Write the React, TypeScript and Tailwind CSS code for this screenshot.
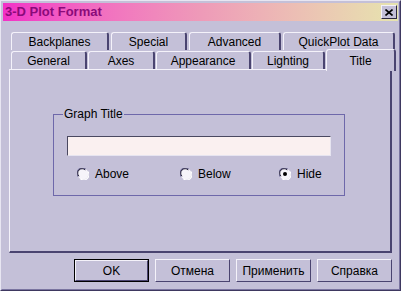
import React from 'react'

const FONT = "font-['Liberation_Sans',Arial,sans-serif]"

const BACK_TABS = [
  { label: 'Backplanes', w: 'w-[98px]' },
  { label: 'Special', w: 'w-[76px]' },
  { label: 'Advanced', w: 'w-[92px]' },
  { label: 'QuickPlot Data', w: 'w-[112px]' },
]

const FRONT_TABS = [
  { label: 'General', w: 'w-[76px]' },
  { label: 'Axes', w: 'w-[67px]' },
  { label: 'Appearance', w: 'w-[95px]' },
  { label: 'Lighting', w: 'w-[73px]' },
]

function Tab({ label, w }: { label: string; w: string }) {
  return (
    <div
      className={`${w} h-[18px] shrink-0 flex items-center justify-center rounded-t-[3px] border-l border-t border-r-2 border-l-[#f4f2fa] border-t-[#f4f2fa] border-r-[#4a4470] text-[12px] text-black`}
    >
      {label}
    </div>
  )
}

function Radio({ label, checked }: { label: string; checked?: boolean }) {
  return (
    <div className="flex items-center gap-[6px] text-[12px] text-black">
      <svg width="12" height="12" viewBox="0 0 12 12">
        <circle cx="6" cy="6" r="5.5" fill="#f6f4fa" />
        <path d="M1.2 8.5 A5.2 5.2 0 0 1 8.5 1.2" stroke="#6a6690" strokeWidth="1.2" fill="none" />
        <path d="M2 8.2 A4.2 4.2 0 0 1 8.2 2" stroke="#2c2840" strokeWidth="1" fill="none" />
        <path d="M3.5 10.8 A5.2 5.2 0 0 0 10.8 3.5" stroke="#ffffff" strokeWidth="1.2" fill="none" />
        {checked && <circle cx="6" cy="6" r="2" fill="#000" />}
      </svg>
      <span>{label}</span>
    </div>
  )
}

function Button({ label, def }: { label: string; def?: boolean }) {
  return (
    <div className={`w-[75px] h-[23px] ${def ? 'border border-black' : ''}`}>
      <div className="w-full h-full flex items-center justify-center border border-l-[#f4f2fa] border-t-[#f4f2fa] border-r-[#4a4470] border-b-[#4a4470] text-[12px] text-black">
        {label}
      </div>
    </div>
  )
}

export default function App() {
  return (
    <div className={`${FONT} w-[401px] h-[291px] bg-[#c4c0d8] border border-l-[#e8e6f2] border-t-[#e8e6f2] border-r-[#3e3860] border-b-[#3e3860] overflow-hidden`}>
      <div className="w-full h-full border border-r-[#7a74a0] border-b-[#7a74a0] border-l-[#c4c0d8] border-t-[#c4c0d8] px-px pt-px flex flex-col">
        {/* title bar */}
        <div className="h-[18px] flex items-center justify-between pl-[2px] pr-[1px] bg-gradient-to-r from-[#f22fc6] via-[#ee9ab8] to-[#e6e4ae]">
          <span className="text-[13px] font-bold text-[#8a0a7a]">3-D Plot Format</span>
          <div className="w-[16px] h-[14px] bg-[#c4c0d8] border border-l-[#f4f2fa] border-t-[#f4f2fa] border-r-[#2c2840] border-b-[#2c2840] flex items-center justify-center">
            <svg width="8" height="7" viewBox="0 0 8 7">
              <path d="M0.5 0.5 L7.5 6.5 M7.5 0.5 L0.5 6.5" stroke="#000" strokeWidth="1.6" />
            </svg>
          </div>
        </div>

        {/* tabs */}
        <div className="mt-[11px] pl-[6px] flex flex-col">
          <div className="flex gap-[2px] pl-[2px]">
            {BACK_TABS.map((t) => (
              <Tab key={t.label} label={t.label} w={t.w} />
            ))}
          </div>
          <div className="flex gap-[1px] pl-[2px] -mt-px items-end">
            {FRONT_TABS.map((t) => (
              <Tab key={t.label} label={t.label} w={t.w} />
            ))}
            <div className="relative z-10 -mb-[2px] w-[70px] h-[22px] shrink-0 flex items-start justify-center pt-[2px] rounded-t-[3px] border-l border-t border-r-2 border-l-[#f4f2fa] border-t-[#f4f2fa] border-r-[#4a4470] bg-[#c4c0d8] text-[12px] text-black">
              Title
            </div>
          </div>

          {/* panel */}
          <div className="w-[383px] h-[184px] border border-l-[#f4f2fa] border-t-[#f4f2fa] border-r-2 border-b-2 border-r-[#4a4470] border-b-[#4a4470] pl-[43px] pt-[44px]">
            <div className="relative w-[292px] h-[82px] border border-[#6e68aa] pt-[21px] pl-[13px]">
              <span className="absolute -top-[9px] left-[9px] px-[1px] bg-[#c4c0d8] text-[12px] text-black leading-[16px]">
                Graph Title
              </span>
              <div className="w-[264px] h-[20px] bg-[#faf0f0] border border-t-[#4a4860] border-l-[#4a4860] border-r-[#e6e4f0] border-b-[#e6e4f0]" />
              <div className="flex mt-[9px] pl-[10px]">
                <div className="w-[103px]"><Radio label="Above" /></div>
                <div className="w-[99px]"><Radio label="Below" /></div>
                <Radio label="Hide" checked />
              </div>
            </div>
          </div>
        </div>

        {/* buttons */}
        <div className="mt-[6px] pl-[71px] flex gap-[6px]">
          <Button label="OK" def />
          <Button label="Отмена" />
          <Button label="Применить" />
          <Button label="Справка" />
        </div>
      </div>
    </div>
  )
}
